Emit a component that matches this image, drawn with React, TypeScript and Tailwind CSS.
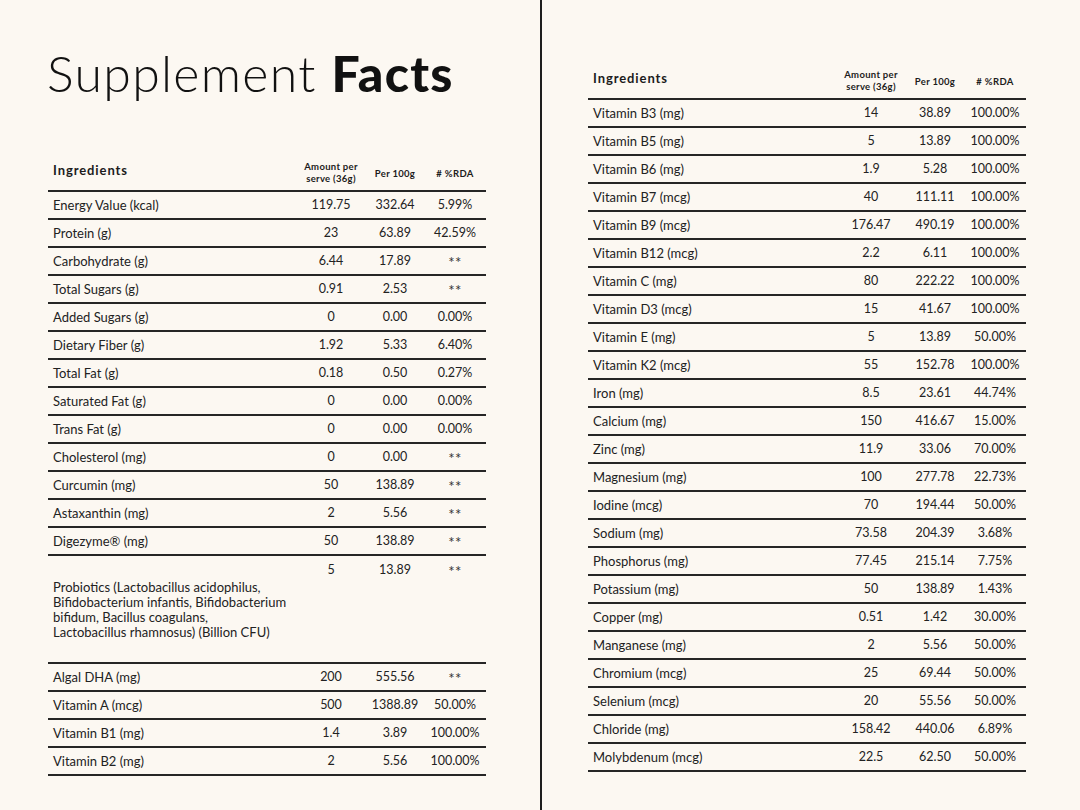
import React from "react";

type Row = [string, string, string, string];

const leftRows: Row[] = [
  ["Energy Value (kcal)", "119.75", "332.64", "5.99%"],
  ["Protein (g)", "23", "63.89", "42.59%"],
  ["Carbohydrate (g)", "6.44", "17.89", "**"],
  ["Total Sugars (g)", "0.91", "2.53", "**"],
  ["Added Sugars (g)", "0", "0.00", "0.00%"],
  ["Dietary Fiber (g)", "1.92", "5.33", "6.40%"],
  ["Total Fat (g)", "0.18", "0.50", "0.27%"],
  ["Saturated Fat (g)", "0", "0.00", "0.00%"],
  ["Trans Fat (g)", "0", "0.00", "0.00%"],
  ["Cholesterol (mg)", "0", "0.00", "**"],
  ["Curcumin (mg)", "50", "138.89", "**"],
  ["Astaxanthin (mg)", "2", "5.56", "**"],
  ["Digezyme® (mg)", "50", "138.89", "**"],
];

const leftRows2: Row[] = [
  ["Algal DHA (mg)", "200", "555.56", "**"],
  ["Vitamin A (mcg)", "500", "1388.89", "50.00%"],
  ["Vitamin B1 (mg)", "1.4", "3.89", "100.00%"],
  ["Vitamin B2 (mg)", "2", "5.56", "100.00%"],
];

const rightRows: Row[] = [
  ["Vitamin B3 (mg)", "14", "38.89", "100.00%"],
  ["Vitamin B5 (mg)", "5", "13.89", "100.00%"],
  ["Vitamin B6 (mg)", "1.9", "5.28", "100.00%"],
  ["Vitamin B7 (mcg)", "40", "111.11", "100.00%"],
  ["Vitamin B9 (mcg)", "176.47", "490.19", "100.00%"],
  ["Vitamin B12 (mcg)", "2.2", "6.11", "100.00%"],
  ["Vitamin C (mg)", "80", "222.22", "100.00%"],
  ["Vitamin D3 (mcg)", "15", "41.67", "100.00%"],
  ["Vitamin E (mg)", "5", "13.89", "50.00%"],
  ["Vitamin K2 (mcg)", "55", "152.78", "100.00%"],
  ["Iron (mg)", "8.5", "23.61", "44.74%"],
  ["Calcium (mg)", "150", "416.67", "15.00%"],
  ["Zinc (mg)", "11.9", "33.06", "70.00%"],
  ["Magnesium (mg)", "100", "277.78", "22.73%"],
  ["Iodine (mcg)", "70", "194.44", "50.00%"],
  ["Sodium (mg)", "73.58", "204.39", "3.68%"],
  ["Phosphorus (mg)", "77.45", "215.14", "7.75%"],
  ["Potassium (mg)", "50", "138.89", "1.43%"],
  ["Copper (mg)", "0.51", "1.42", "30.00%"],
  ["Manganese (mg)", "2", "5.56", "50.00%"],
  ["Chromium (mcg)", "25", "69.44", "50.00%"],
  ["Selenium (mcg)", "20", "55.56", "50.00%"],
  ["Chloride (mg)", "158.42", "440.06", "6.89%"],
  ["Molybdenum (mcg)", "22.5", "62.50", "50.00%"],
];

const grid = "grid grid-cols-[1fr_64px_64px_56px] pr-[3px]";

function Value({ v }: { v: string }) {
  if (v === "**") {
    return (
      <span className="text-[15px] leading-[10px] relative top-[3px] tracking-[0.5px] text-[#333]">
        **
      </span>
    );
  }
  return <span>{v}</span>;
}

function Header() {
  return (
    <div className={`${grid} h-[36px] items-center border-b-2 border-[#262626] text-[#1c1c1c]`}>
      <div className="pl-[5px] text-[13px] font-bold tracking-[0.9px] -mt-[4px]">Ingredients</div>
      <div className="text-center text-[9.5px] font-bold leading-[12px] tracking-[0.3px]">
        Amount per
        <br />
        serve (36g)
      </div>
      <div className="text-center text-[9.5px] font-bold tracking-[0.3px] mt-[2px]">Per 100g</div>
      <div className="text-center text-[9.5px] font-bold tracking-[0.4px] mt-[3px]">
        # %RDA
      </div>
    </div>
  );
}

function TableRow({ r }: { r: Row }) {
  return (
    <div className={`${grid} h-[28px] items-center border-b-2 border-[#262626] text-[12.5px] text-[#222]`}>
      <div className="pl-[5px] pt-[1px] text-[13px]">{r[0]}</div>
      <div className="text-center">
        <Value v={r[1]} />
      </div>
      <div className="text-center">
        <Value v={r[2]} />
      </div>
      <div className="text-center">
        <Value v={r[3]} />
      </div>
    </div>
  );
}

export default function App() {
  return (
    <div
      className="w-[1080px] h-[810px] bg-[#fcf8f2] flex overflow-hidden text-[#1c1c1c]"
      style={{ fontFamily: "Lato, 'Noto Sans', sans-serif" }}
    >
      <div className="w-[540px] shrink-0 pl-[47px] pr-[54px]">
        <h1 className="mt-[43px] text-[50px] leading-[60px] font-light tracking-[1.3px] text-[#111] whitespace-nowrap">
          Supplement <span className="font-black">Facts</span>
        </h1>
        <div className="mt-[53px] ml-[1px]">
          <Header />
          {leftRows.map((r) => (
            <TableRow key={r[0]} r={r} />
          ))}
          <div className={`${grid} h-[108px] border-b-2 border-[#262626] text-[12.5px] text-[#222]`}>
            <div className="pl-[5px] self-center leading-[15px] pt-[1px] text-[13px]">
              Probiotics (Lactobacillus acidophilus,
              <br />
              Bifidobacterium infantis, Bifidobacterium
              <br />
              bifidum, Bacillus coagulans,
              <br />
              Lactobacillus rhamnosus) (Billion CFU)
            </div>
            <div className="text-center pt-[5px]">5</div>
            <div className="text-center pt-[5px]">13.89</div>
            <div className="text-center pt-[5px]">
              <Value v="**" />
            </div>
          </div>
          {leftRows2.map((r) => (
            <TableRow key={r[0]} r={r} />
          ))}
        </div>
      </div>
      <div className="w-[2px] shrink-0 bg-[#1e1e1e]" />
      <div className="w-[438px] shrink-0 ml-[46px] pt-[64px]">
        <Header />
        {rightRows.map((r) => (
          <TableRow key={r[0]} r={r} />
        ))}
      </div>
    </div>
  );
}
